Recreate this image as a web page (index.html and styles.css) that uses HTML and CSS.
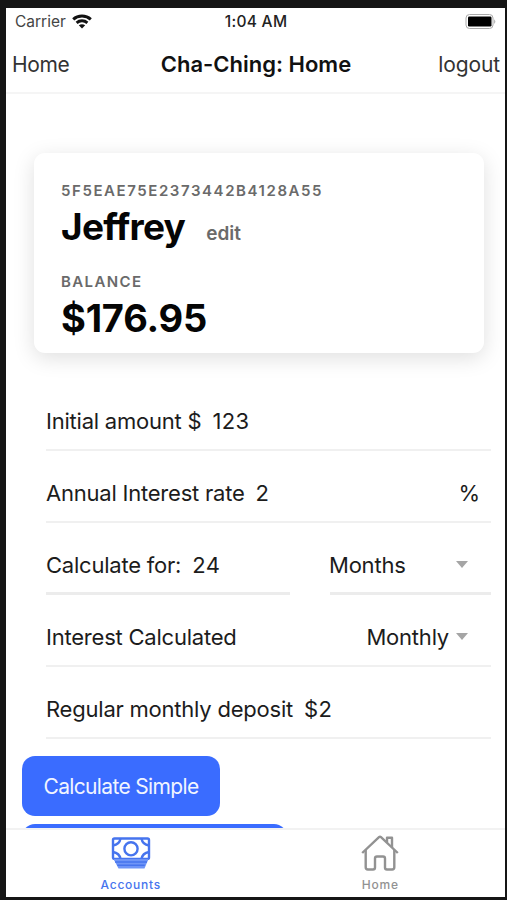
FILE: index.html
```html
<!DOCTYPE html>
<html lang="en">
<head>
  <meta charset="UTF-8" />
  <meta name="viewport" content="width=device-width, initial-scale=1.0" />
  <title>Cha-Ching: Home</title>
  <link rel="stylesheet" href="styles.css">
</head>
<body>

  <div class="screen">

    <!-- Status bar -->
    <div class="status-bar">
      <div class="carrier">
        <span>Carrier</span>
        <svg class="wifi" viewBox="0 0 20 15">
          <path d="M1.2 5.4 C6 0.9 14 0.9 18.8 5.4" />
          <path d="M4.6 8.8 C7.7 6 12.3 6 15.4 8.8" />
          <path class="dot" d="M10 14.4 L6.8 11.3 Q10 9 13.2 11.3 Z" />
        </svg>
      </div>
      <span class="time">1:04 AM</span>
      <svg class="battery" viewBox="0 0 32 16">
        <rect class="shell" x="1" y="0.5" width="27" height="14" rx="3.5" />
        <rect x="3" y="2.5" width="23.5" height="10" rx="1.2" />
        <path class="cap" d="M29.2 5.2 Q31.5 7.5 29.2 10 Z" />
      </svg>
    </div>

    <header class="header">
      <a class="header-link">Home</a>
      <h1>Cha-Ching: Home</h1>
      <a class="header-link right">logout</a>
    </header>

    <main class="content">
      <section class="card">
        <p class="label account-id">5F5EAE75E2373442B4128A55</p>
        <div class="name-row">
          <h2>Jeffrey</h2>
          <a class="edit">edit</a>
        </div>
        <p class="label">BALANCE</p>
        <p class="balance">$176.95</p>
      </section>

      <form class="form">
        <div class="row">
          <label>Initial amount $</label>
          <span class="value">123</span>
        </div>
        <div class="row">
          <label>Annual Interest rate</label>
          <span class="value">2</span>
          <span class="percent">%</span>
        </div>
        <div class="split">
          <div class="row thick">
            <label>Calculate for:</label>
            <span class="value">24</span>
          </div>
          <div class="row thick select">
            <span class="months">Months</span>
            <span class="arrow"></span>
          </div>
        </div>
        <div class="row select">
          <label>Interest Calculated</label>
          <span class="monthly">Monthly</span>
          <span class="arrow"></span>
        </div>
        <div class="row">
          <label>Regular monthly deposit</label>
          <span class="value">$2</span>
        </div>
      </form>

      <div class="buttons">
        <button class="btn simple">Calculate Simple</button>
        <button class="btn compound"></button>
      </div>
    </main>

    <!-- Tabs -->
    <nav class="tabs">
      <a class="tab active">
        <svg class="cash-icon" viewBox="0 0 40 32">
          <rect x="2" y="1.5" width="36" height="20.5" rx="1.5" />
          <circle cx="20" cy="11.8" r="6.6" />
          <path d="M2 8.5 Q8.5 7.5 9.5 1.5 M30.5 1.5 Q31.5 7.5 38 8.5 M2 15 Q8.5 16 9.5 22 M30.5 22 Q31.5 16 38 15" />
          <path class="fill" d="M2.5 22 H37.5 L33.5 31.5 H7.5 Z" />
          <path class="fine" d="M4 25 H36 M6.3 28.2 H33.7" />
        </svg>
        <span>Accounts</span>
      </a>
      <a class="tab">
        <svg class="home-icon" viewBox="0 0 38 36">
          <path d="M1.2 18 L18 2.2 Q19 1.3 20 2.2 L36.8 18" />
          <path d="M4.7 15 V32.3 Q4.7 34.5 6.9 34.5 H12 Q14 34.5 14 32.5 V23.5 Q14 21.5 16 21.5 H22 Q24 21.5 24 23.5 V32.5 Q24 34.5 26 34.5 H31.1 Q33.3 34.5 33.3 32.3 V15" />
          <path d="M26 7.5 V2.7 H31 V12.3" />
        </svg>
        <span>Home</span>
      </a>
    </nav>
  </div>

</body>
</html>
```
FILE: styles.css
```css
* {
  box-sizing: border-box;
}

body {
  margin: 0;
  padding: 8px 2px 3px 6px;
  height: 900px;
  background: #151515;
  color: #1c1c1c;
  font-family: Inter, 'Liberation Sans', sans-serif;
  overflow: hidden;
}

h1, h2, p {
  margin: 0;
}

.screen {
  display: flex;
  flex-direction: column;
  height: 889px;
  background: #fff;
}

.status-bar {
  display: grid;
  grid-template-columns: 1fr auto 1fr;
  align-items: center;
  height: 27px;
  padding: 0 8px 0 9px;
  font-size: 15.5px;
}

.carrier {
  display: flex;
  align-items: center;
  gap: 6px;
  color: #444;
}

.wifi {
  width: 20px;
  height: 15px;
  fill: none;
  stroke: #111;
  stroke-width: 2.9;
}

.wifi .dot {
  fill: #111;
  stroke: none;
}

.time {
  font-weight: 500;
  letter-spacing: 0.3px;
  color: #222;
}

.battery {
  justify-self: end;
  width: 32px;
  height: 16px;
}

.battery .shell {
  fill: none;
  stroke: #aaa;
}

.battery .cap {
  fill: #aaa;
}

.header {
  display: grid;
  grid-template-columns: 1fr auto 1fr;
  align-items: center;
  height: 59px;
  padding: 1px 5px 0 6px;
  border-bottom: 2px solid #f5f5f5;
}

.header h1 {
  font-size: 22px;
  font-weight: 600;
  color: #111;
}

.header-link {
  font-size: 21px;
  letter-spacing: -0.4px;
  color: #333;
}

.header-link.right {
  justify-self: end;
  letter-spacing: -0.1px;
}

.content {
  flex: 1;
  min-height: 0;
  overflow: hidden;
  padding-top: 59px;
}

.card {
  height: 200px;
  margin: 0 21px 0 28px;
  padding: 28px 27px 0;
  border-radius: 11px;
  background: #fff;
  box-shadow: 0 5px 21px rgba(0, 0, 0, 0.13);
}

.label {
  height: 20px;
  font-size: 15px;
  line-height: 20px;
  font-weight: 600;
  letter-spacing: 1.4px;
  color: #6a6a6a;
}

.account-id {
  letter-spacing: 1.57px;
}

.name-row {
  display: flex;
  align-items: baseline;
  gap: 21px;
  height: 71px;
  line-height: 52px;
}

.name-row h2, .balance {
  font-size: 38px;
  font-weight: 700;
  color: #050505;
}

.name-row h2 {
  font-size: 37px;
  letter-spacing: -0.75px;
}

.edit {
  font-size: 19px;
  font-weight: 600;
  color: #6a6a6a;
}

.balance {
  line-height: 52px;
  letter-spacing: -0.2px;
}

.form {
  padding: 26px 14px 0 40px;
  font-size: 22px;
  letter-spacing: -0.22px;
}

.row {
  display: flex;
  align-items: center;
  height: 72px;
  padding-top: 13px;
  border-bottom: 2px solid #f0f0f0;
}

.row.thick {
  padding-top: 14px;
  border-bottom: 3px solid #ececec;
}

.value {
  margin-left: 11px;
  letter-spacing: 0.4px;
}

.percent {
  margin-left: auto;
  padding-right: 11px;
}

.split {
  display: grid;
  grid-template-columns: 244px 161px;
  justify-content: space-between;
}

.select {
  padding-right: 23px;
}

.months {
  margin-left: -1px;
}

.monthly {
  margin-left: auto;
}

.arrow {
  margin-left: 7px;
  border: 6px solid transparent;
  border-top: 7px solid #a5a5a5;
  border-bottom: 0;
}

.months + .arrow {
  margin-left: auto;
}

.buttons {
  display: flex;
  flex-direction: column;
  gap: 8px;
  padding: 17px 0 0 16px;
}

.btn {
  flex: none;
  height: 60px;
  padding: 0;
  border: 0;
  border-radius: 13px;
  background: #3a6cff;
  color: #f1f5ff;
  font-family: inherit;
  font-size: 21px;
  letter-spacing: -0.65px;
}

.simple {
  width: 198px;
}

.compound {
  width: 265px;
}

.tabs {
  display: grid;
  grid-template-columns: 1fr 1fr;
  height: 69px;
  border-top: 2px solid #f2f2f2;
}

.tab {
  display: flex;
  flex-direction: column;
  align-items: center;
  padding-top: 5px;
  color: #929292;
  font-size: 12px;
  font-weight: 500;
  line-height: 16px;
  letter-spacing: 0.75px;
}

.tab svg {
  height: 36px;
  margin-bottom: 6px;
  fill: none;
  stroke: currentColor;
  stroke-width: 2.4;
  stroke-linejoin: round;
}

.tab.active {
  color: #4674ee;
}

.cash-icon {
  width: 40px;
}

.cash-icon .fill {
  fill: #6f95f7;
  stroke: none;
}

.cash-icon .fine {
  stroke-width: 1.4;
}

.home-icon {
  width: 38px;
}
```
